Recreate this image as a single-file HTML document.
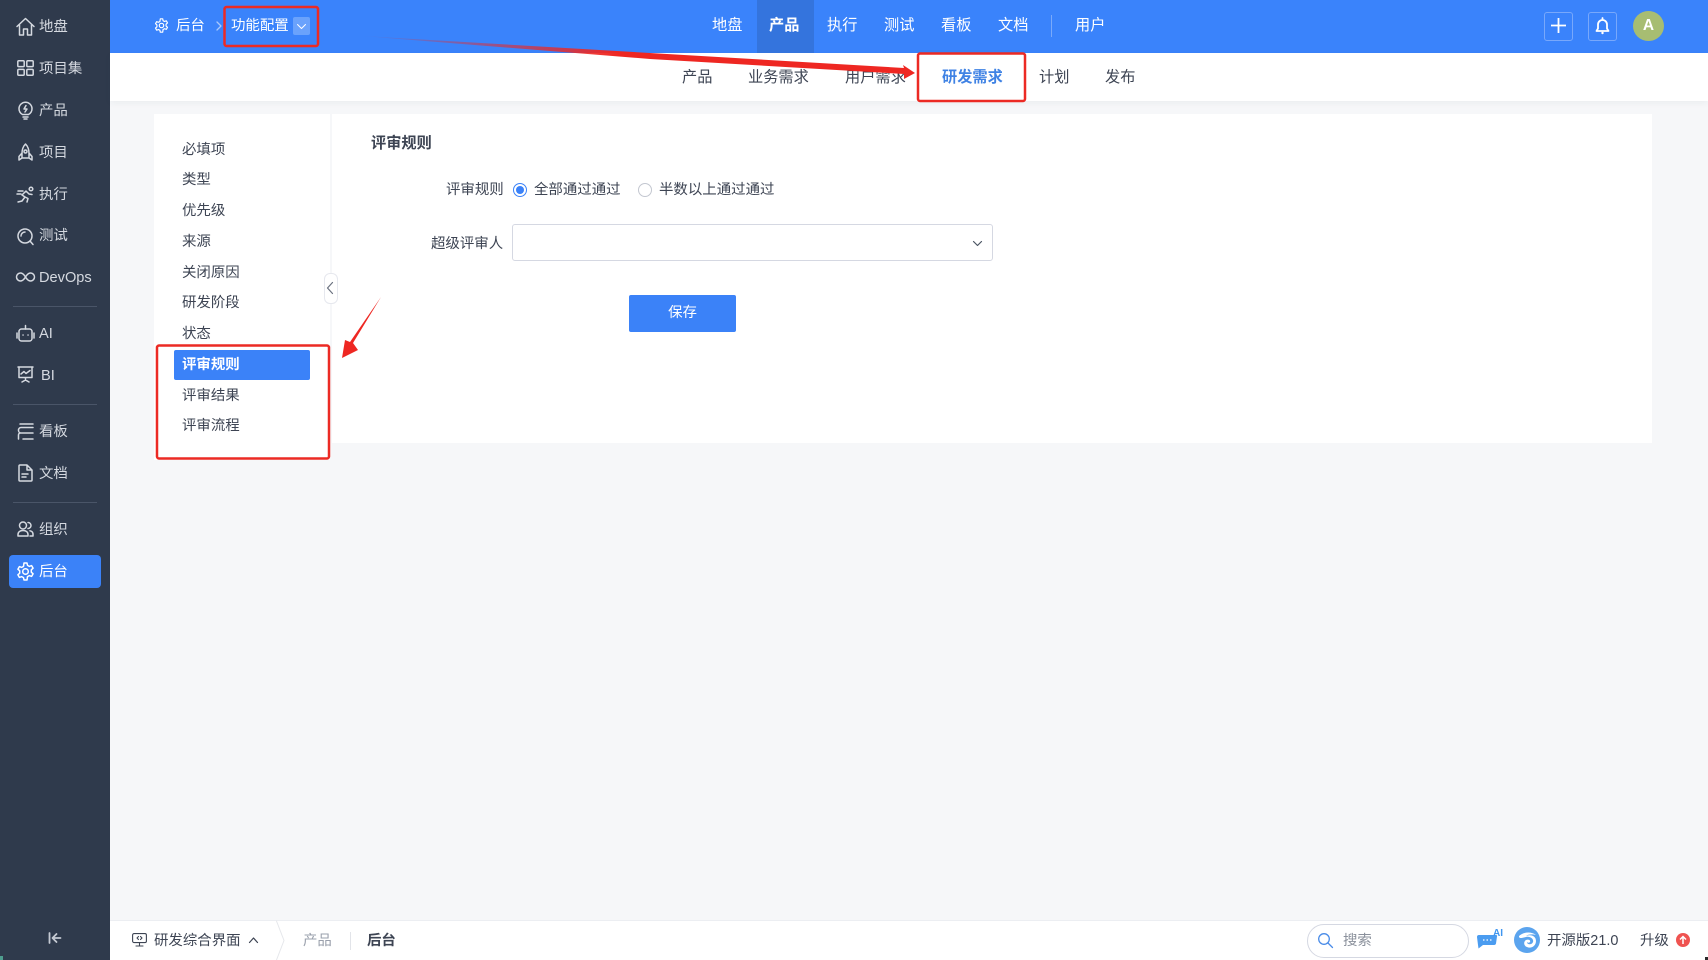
<!DOCTYPE html>
<html lang="zh"><head><meta charset="utf-8"><title>后台</title>
<style>
html,body{margin:0;padding:0}
body{width:1708px;height:960px;overflow:hidden;background:#f6f7f9;position:relative;font:14.45px/20px "Liberation Sans","Noto Sans CJK SC",sans-serif;color:#3d4453}
div,svg,span{position:absolute}
.t{white-space:nowrap}
.s{color:#d5d9e0;left:39px}
.n{color:#fff;top:16px}
.w{font-size:15.2px}
.b{color:#3d4453;top:68px;font-size:15.2px}
.m{left:182px}
svg{overflow:visible}
.ic{fill:none;stroke:#d5d9e0;stroke-width:1.5;stroke-linecap:round;stroke-linejoin:round}
.hr{left:13px;width:84px;height:1px;background:#4a5568}
</style></head><body>

<div style="left:0;top:0;width:110px;height:960px;background:#2f3a4c"></div>
<div style="left:0;top:956px;width:3px;height:4px;background:#4f9d8f"></div>

<svg class="ic" style="left:16px;top:17px" width="19" height="19" viewBox="0 0 19 19"><path d="M1 9.5 9.5 1.5 18 9.5M3.5 8v10h4v-6h4v6h4V8"/></svg>
<div class="t s" style="top:17px">地盘</div>
<svg class="ic" style="left:17px;top:60px" width="17" height="16" viewBox="0 0 17 16"><rect x=".8" y=".8" width="6.4" height="5.8" rx="1"/><rect x="9.8" y=".8" width="6.4" height="5.8" rx="1"/><rect x=".8" y="9.4" width="6.4" height="5.8" rx="1"/><rect x="9.8" y="9.4" width="6.4" height="5.8" rx="1"/></svg>
<div class="t s" style="top:59px">项目集</div>
<svg class="ic" style="left:18px;top:101px" width="15" height="19" viewBox="0 0 15 19"><path d="M4.5 13.5C2.3 12.2 1 10.2 1 7.7a6.5 6.5 0 0 1 13 0c0 2.500-1.300 4.500-3.500 5.800zM5 16h5M6 18h3M8 4.500 6 8h3L7 11"/></svg>
<div class="t s" style="top:101px">产品</div>
<svg class="ic" style="left:18px;top:143px" width="15" height="19" viewBox="0 0 15 19"><path d="M7.500 1C5 3.500 4 7 4 10.500V15h7v-4.500C11 7 10 3.500 7.500 1zM4 10 1 13.500V17l3-2M11 10l3 3.500V17l-3-2"/><circle cx="7.500" cy="8.500" r="1.500"/></svg>
<div class="t s" style="top:143px">项目</div>
<svg class="ic" style="left:16px;top:186px" width="19" height="17" viewBox="0 0 19 17"><circle cx="15" cy="3" r="1.800"/><path d="M2 16l4-1 3-4-3-2 4-4 3 3 3 .5M9 11l3 1.500-1 3.500M1 8h4M2 5h5"/></svg>
<div class="t s" style="top:185px">执行</div>
<svg class="ic" style="left:17px;top:228px" width="17" height="17" viewBox="0 0 17 17"><circle cx="8" cy="8" r="7"/><path d="M13 13l3 3.500M4 8a4 4 0 0 1 4-4"/></svg>
<div class="t s" style="top:226px">测试</div>
<svg class="ic" style="left:16px;top:272px" width="19" height="10" viewBox="0 0 19 10"><path d="M9.500 5C8 2.500 6.500 1 4.500 1a4 4 0 0 0 0 8c2 0 3.500-1.500 5-4s3-4 5-4a4 4 0 0 1 0 8c-2 0-3.500-1.500-5-4z"/></svg>
<div class="t s" style="top:268px;font-size:14.6px">DevOps</div>
<div class="hr" style="top:306px"></div>
<svg class="ic" style="left:16px;top:324px" width="19" height="18" viewBox="0 0 19 18"><rect x="3" y="5" width="13" height="12" rx="2.500"/><path d="M9.500 5V1.500M1 9v5M18 9v5M7 11h.1M12 11h.1"/></svg>
<div class="t s" style="top:324px;font-size:14.6px">AI</div>
<svg class="ic" style="left:17px;top:366px" width="17" height="17" viewBox="0 0 17 17"><path d="M1 1h15M2 1v10.500h13V1M4 8l3-2.500 2 2 4-3M8.500 11.500V14M5 16l3.500-2 3.500 2"/></svg>
<div class="t s" style="top:366px;left:41px;font-size:14.6px">BI</div>
<div class="hr" style="top:404px"></div>
<svg class="ic" style="left:17px;top:423px" width="17" height="17" viewBox="0 0 17 17"><path d="M3 1h13M16 4.500H4a2.500 2.500 0 0 0-2.500 2.500v.5A2.500 2.500 0 0 0 4 10h12M16 10H3.500A2 2 0 0 0 1.500 12v4M6 16h10" /></svg>
<div class="t s" style="top:422px">看板</div>
<svg class="ic" style="left:18px;top:464px" width="15" height="18" viewBox="0 0 15 18"><path d="M1 2a1 1 0 0 1 1-1h7l5 5v10a1 1 0 0 1-1 1H2a1 1 0 0 1-1-1zM9 1v5h5M4 10h6M4 13h4"/></svg>
<div class="t s" style="top:464px">文档</div>
<div class="hr" style="top:502px"></div>
<svg class="ic" style="left:17px;top:521px" width="17" height="16" viewBox="0 0 17 16"><circle cx="6" cy="4.500" r="3.500"/><path d="M1 15v-1.500C1 11 3 9.500 6 9.500s5 1.500 5 4V15zM11 1.500a3 3 0 0 1 0 6M13 9.800c2 .4 3 1.700 3 3.500V15h-3"/></svg>
<div class="t s" style="top:520px">组织</div>
<div style="left:9px;top:555px;width:92px;height:33px;background:#3b82f8;border-radius:4px"></div>
<svg class="ic" style="left:16px;top:562px;stroke:#fff" width="19" height="19" viewBox="0 0 19 19"><path d="M8 1h3l.5 2.400 1.800 1 2.300-.8 1.500 2.600-1.800 1.600v2.400l1.800 1.600-1.500 2.600-2.300-.8-1.800 1L11 18H8l-.5-2.400-1.800-1-2.300.8-1.500-2.600 1.800-1.600V8.800L1.900 7.200l1.500-2.600 2.300.8 1.800-1z"/><circle cx="9.500" cy="9.500" r="2.800"/></svg>
<div class="t s" style="top:562px;color:#fff">后台</div>
<svg class="ic" style="left:48px;top:932px;stroke:#c4c9d2;stroke-width:1.800" width="14" height="12" viewBox="0 0 14 12"><path d="M1.500 1v10M12.500 6H5M8.500 2 4.500 6l4 4"/></svg>

<div style="left:110px;top:0;width:1598px;height:53px;background:#3a83fb"></div>
<div style="left:110px;top:53px;width:1598px;height:48px;background:#fff;box-shadow:0 2px 6px rgba(40,50,70,.05)"></div>

<svg class="ic" style="left:154px;top:18px;stroke:#fff" width="15" height="15" viewBox="0 0 19 19"><path d="M8 1h3l.5 2.400 1.800 1 2.300-.8 1.500 2.600-1.800 1.600v2.400l1.800 1.600-1.500 2.600-2.300-.8-1.800 1L11 18H8l-.5-2.400-1.800-1-2.300.8-1.500-2.600 1.800-1.600V8.800L1.900 7.200l1.500-2.600 2.300.8 1.800-1z" stroke-width="1.500"/><circle cx="9.500" cy="9.500" r="2.800" stroke-width="1.500"/></svg>
<div class="t n" style="left:176px">后台</div>
<svg class="ic" style="left:216px;top:21px;stroke:#a9c8fb;stroke-width:1.300" width="6" height="10" viewBox="0 0 6 10"><path d="M1 1l4 4-4 4"/></svg>
<div class="t n" style="left:231px">功能配置</div>
<div style="left:293px;top:17px;width:17px;height:18px;background:#6aa2fc;border-radius:2px"></div>
<svg class="ic" style="left:297px;top:24px;stroke:#fff;stroke-width:1" width="9" height="5" viewBox="0 0 9 5"><path d="M.5.500 4.500 4.500 8.500.500"/></svg>

<div style="left:757px;top:0;width:57px;height:53px;background:#3474dd"></div>
<div class="t n w" style="left:712px">地盘</div>
<div class="t n w" style="left:769px;font-weight:bold">产品</div>
<div class="t n w" style="left:827px">执行</div>
<div class="t n w" style="left:884px">测试</div>
<div class="t n w" style="left:941px">看板</div>
<div class="t n w" style="left:998px">文档</div>
<div style="left:1051px;top:15px;width:1px;height:22px;background:#7aaafa"></div>
<div class="t n w" style="left:1075px">用户</div>

<div style="left:1544px;top:12px;width:27px;height:27px;border:1px solid #78a8fb;border-radius:3px"></div>
<svg style="left:1551px;top:18px" width="15" height="15" viewBox="0 0 15 15"><path d="M7.500 0v15M0 7.500h15" stroke="#fff" stroke-width="1.800"/></svg>
<div style="left:1588px;top:12px;width:27px;height:27px;border:1px solid #78a8fb;border-radius:3px"></div>
<svg class="ic" style="left:1595px;top:17px;stroke:#fff;stroke-width:1.800" width="15" height="18" viewBox="0 0 15 18"><path d="M1.500 14h12l-1.500-2.500V7.500a4.500 4.500 0 0 0-9 0v4zM7.500 1v2"/><circle cx="7.500" cy="16" r="1.200" fill="#fff" stroke="none"/></svg>
<div style="left:1633px;top:11px;width:31px;height:30px;border-radius:50%;background:#a7bd72;color:#fff;text-align:center;line-height:30px;font-size:15.5px;font-weight:bold">A</div>

<div class="t b" style="left:682px">产品</div>
<div class="t b" style="left:748px">业务需求</div>
<div class="t b" style="left:845px">用户需求</div>
<div class="t b" style="left:942px;color:#3f82e4;font-weight:bold">研发需求</div>
<div class="t b" style="left:1039px">计划</div>
<div class="t b" style="left:1105px">发布</div>

<div style="left:154px;top:114px;width:176px;height:346px;background:#fff"></div>
<div style="left:332px;top:114px;width:1320px;height:329px;background:#fff"></div>
<div style="left:174px;top:350px;width:136px;height:30px;background:#3b82f8;border-radius:2px"></div>
<div class="t m" style="top:140px">必填项</div>
<div class="t m" style="top:170px">类型</div>
<div class="t m" style="top:201px">优先级</div>
<div class="t m" style="top:232px">来源</div>
<div class="t m" style="top:263px">关闭原因</div>
<div class="t m" style="top:293px">研发阶段</div>
<div class="t m" style="top:324px">状态</div>
<div class="t m" style="top:355px;color:#fff;font-weight:bold">评审规则</div>
<div class="t m" style="top:386px">评审结果</div>
<div class="t m" style="top:416px">评审流程</div>
<div style="left:324px;top:273px;width:12px;height:29px;background:#fff;border:1px solid #e6e8ee;border-radius:6px"></div>
<svg class="ic" style="left:327px;top:282px;stroke:#6b7280;stroke-width:1.200" width="6" height="12" viewBox="0 0 6 12"><path d="M5.500.500.500 6l5 5.500"/></svg>

<div class="t" style="left:371px;top:133px;font-weight:bold;font-size:15.2px;line-height:22px">评审规则</div>
<div class="t" style="left:446px;top:180px">评审规则</div>
<div style="left:513px;top:183px;width:12px;height:12px;border:1px solid #3b82f8;border-radius:50%;background:#fff"></div>
<div style="left:516px;top:186px;width:8px;height:8px;border-radius:50%;background:#3b82f8"></div>
<div class="t" style="left:534px;top:180px">全部通过通过</div>
<div style="left:638px;top:183px;width:12px;height:12px;border:1px solid #c3c7d0;border-radius:50%;background:#fff"></div>
<div class="t" style="left:659px;top:180px">半数以上通过通过</div>
<div class="t" style="left:431px;top:234px">超级评审人</div>
<div style="left:512px;top:224px;width:479px;height:35px;border:1px solid #d5d8e2;border-radius:3px;background:#fff"></div>
<svg class="ic" style="left:973px;top:241px;stroke:#4b5563;stroke-width:1.200" width="9" height="5" viewBox="0 0 9 5"><path d="M.500.500 4.500 4.500 8.500.500"/></svg>
<div style="left:629px;top:295px;width:107px;height:37px;background:#3b82f8;border-radius:2px;color:#fff;text-align:center;line-height:37px">保存</div>

<div style="left:110px;top:920px;width:1598px;height:40px;background:#fff;border-top:1px solid #eceef2;box-sizing:border-box"></div>
<svg class="ic" style="left:132px;top:933px;stroke:#3d4453;stroke-width:1.100" width="15" height="14" viewBox="0 0 15 14"><rect x=".6" y=".6" width="13.800" height="9" rx="1.500"/><path d="M7.500 9.600V13M4 13h7M6.500 3.500 5 5l1.500 1.500M8.500 3.500 10 5 8.500 6.500"/></svg>
<div class="t" style="left:154px;top:931px">研发综合界面</div>
<svg class="ic" style="left:249px;top:937px;stroke:#3d4453;stroke-width:1.200" width="9" height="6" viewBox="0 0 9 6"><path d="M.5 5.500 4.500 1l4 4.500"/></svg>
<svg class="ic" style="left:276px;top:921px;stroke:#e5e7eb;stroke-width:1" width="9" height="39" viewBox="0 0 9 39"><path d="M.500 0 8 19.500.500 39"/></svg>
<div class="t" style="left:303px;top:931px;color:#9aa0ac">产品</div>
<div style="left:350px;top:932px;width:1px;height:18px;background:#e2e4e9"></div>
<div class="t" style="left:367px;top:931px;font-weight:bold">后台</div>

<div style="left:1307px;top:924px;width:160px;height:32px;border:1px solid #d5d8e2;border-radius:17px;background:#fff"></div>
<svg class="ic" style="left:1318px;top:933px;stroke:#4a8ce8;stroke-width:1.300" width="15" height="15" viewBox="0 0 15 15"><circle cx="6" cy="6" r="5.300"/><path d="M10 10l4.500 4.500"/></svg>
<div class="t" style="left:1343px;top:931px;color:#8b919c">搜索</div>
<svg style="left:1477px;top:932px" width="20" height="18" viewBox="0 0 20 18"><path d="M2 3h17a1 1 0 0 1 1 1.500l-1 7a2 2 0 0 1-2 1.500H6l-4.500 3.500L1 13 0 5a2 2 0 0 1 2-2z" fill="#4b9cf0"/><path d="M6 8h1.500M9.500 8H11M13 8h1.500" stroke="#fff" stroke-width="1.300"/></svg>
<div class="t" style="left:1493px;top:929px;color:#3f96f0;font-size:10px;line-height:10px;font-weight:bold">AI</div>
<svg style="left:1514px;top:927px" width="26" height="26" viewBox="0 0 26 26"><circle cx="13" cy="13" r="13" fill="#5ba4ee"/><path d="M5 9c4-4 12-5 17-1-3-1-8-1-10 1 5-2 10 0 10 5 0 5-5 8-9 6-3-1-4-5-1-7 2-1 5 0 4 2-1 1-2 1-3 0 0 3 5 3 6 0 1-3-3-6-7-5-3 .5-6 2-7 0z" fill="#fff"/></svg>
<div class="t" style="left:1547px;top:931px">开源版21.0</div>
<div class="t" style="left:1640px;top:931px">升级</div>
<svg style="left:1676px;top:933px" width="14" height="14" viewBox="0 0 14 14"><circle cx="7" cy="7" r="7" fill="#ef5350"/><path d="M7 11V4M4 6.500 7 3.500l3 3" fill="none" stroke="#fff" stroke-width="1.500"/></svg>
<div style="right:0;bottom:0;width:3px;height:3px;background:#2b2b2b"></div>

<svg style="left:0;top:0;pointer-events:none" width="1708" height="960" viewBox="0 0 1708 960">
<defs><linearGradient id="g" gradientUnits="userSpaceOnUse" x1="363" y1="36" x2="620" y2="52"><stop offset="0" stop-color="#ee2722" stop-opacity=".05"/><stop offset="1" stop-color="#ee2722"/></linearGradient></defs>
<polygon points="363,36 904,68 903,65 915,73 904,79 904,74 650,59" fill="url(#g)"/>
<polygon points="381,297 353,343 358,350 342,358 345,340 350,342" fill="#ee2722"/>
<g fill="none" stroke="#ec2a24" stroke-width="2.500">
<rect x="224.500" y="7" width="93.500" height="39" rx="2"/>
<rect x="918" y="53.500" width="107" height="47.500" rx="2"/>
<rect x="157" y="345.500" width="172" height="113" rx="2"/>
</g></svg>
</body></html>
